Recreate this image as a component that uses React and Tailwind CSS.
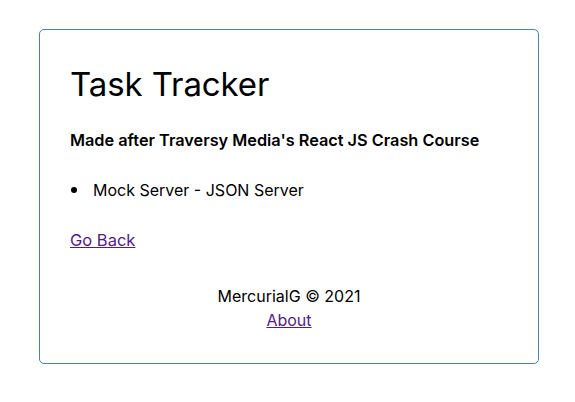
export default function App() {
  return (
    <div className="bg-white pt-[29px] pl-[3px] text-black font-['Inter','Noto_Sans',sans-serif]">
      <div className="mx-auto w-[500px] rounded-[5px] border border-[#4682b4] px-[30px] pt-[30px] pb-[31px]">
        <h1 className="text-[33px] leading-[48px] font-normal tracking-[-0.1px]">Task Tracker</h1>
        <h4 className="mt-[20px] text-[16.3px] leading-[24px] font-semibold">
          Made after Traversy Media's React JS Crash Course
        </h4>
        <ul className="mt-[26px]">
          <li className="flex items-center text-[16px] leading-[24px]">
            <span className="ml-[1px] h-[6px] w-[6px] rounded-full bg-black" />
            <span className="ml-[16px]">Mock Server - JSON Server</span>
          </li>
        </ul>
        <div className="mt-[26px] text-[16.5px] leading-[24px]">
          <a href="#" className="text-[#551a8b] underline">Go Back</a>
        </div>
        <footer className="mt-[32px] text-center text-[16px] leading-[24px]">
          <p>MercurialG © 2021</p>
          <a href="#" className="text-[#551a8b] underline">About</a>
        </footer>
      </div>
    </div>
  );
}
